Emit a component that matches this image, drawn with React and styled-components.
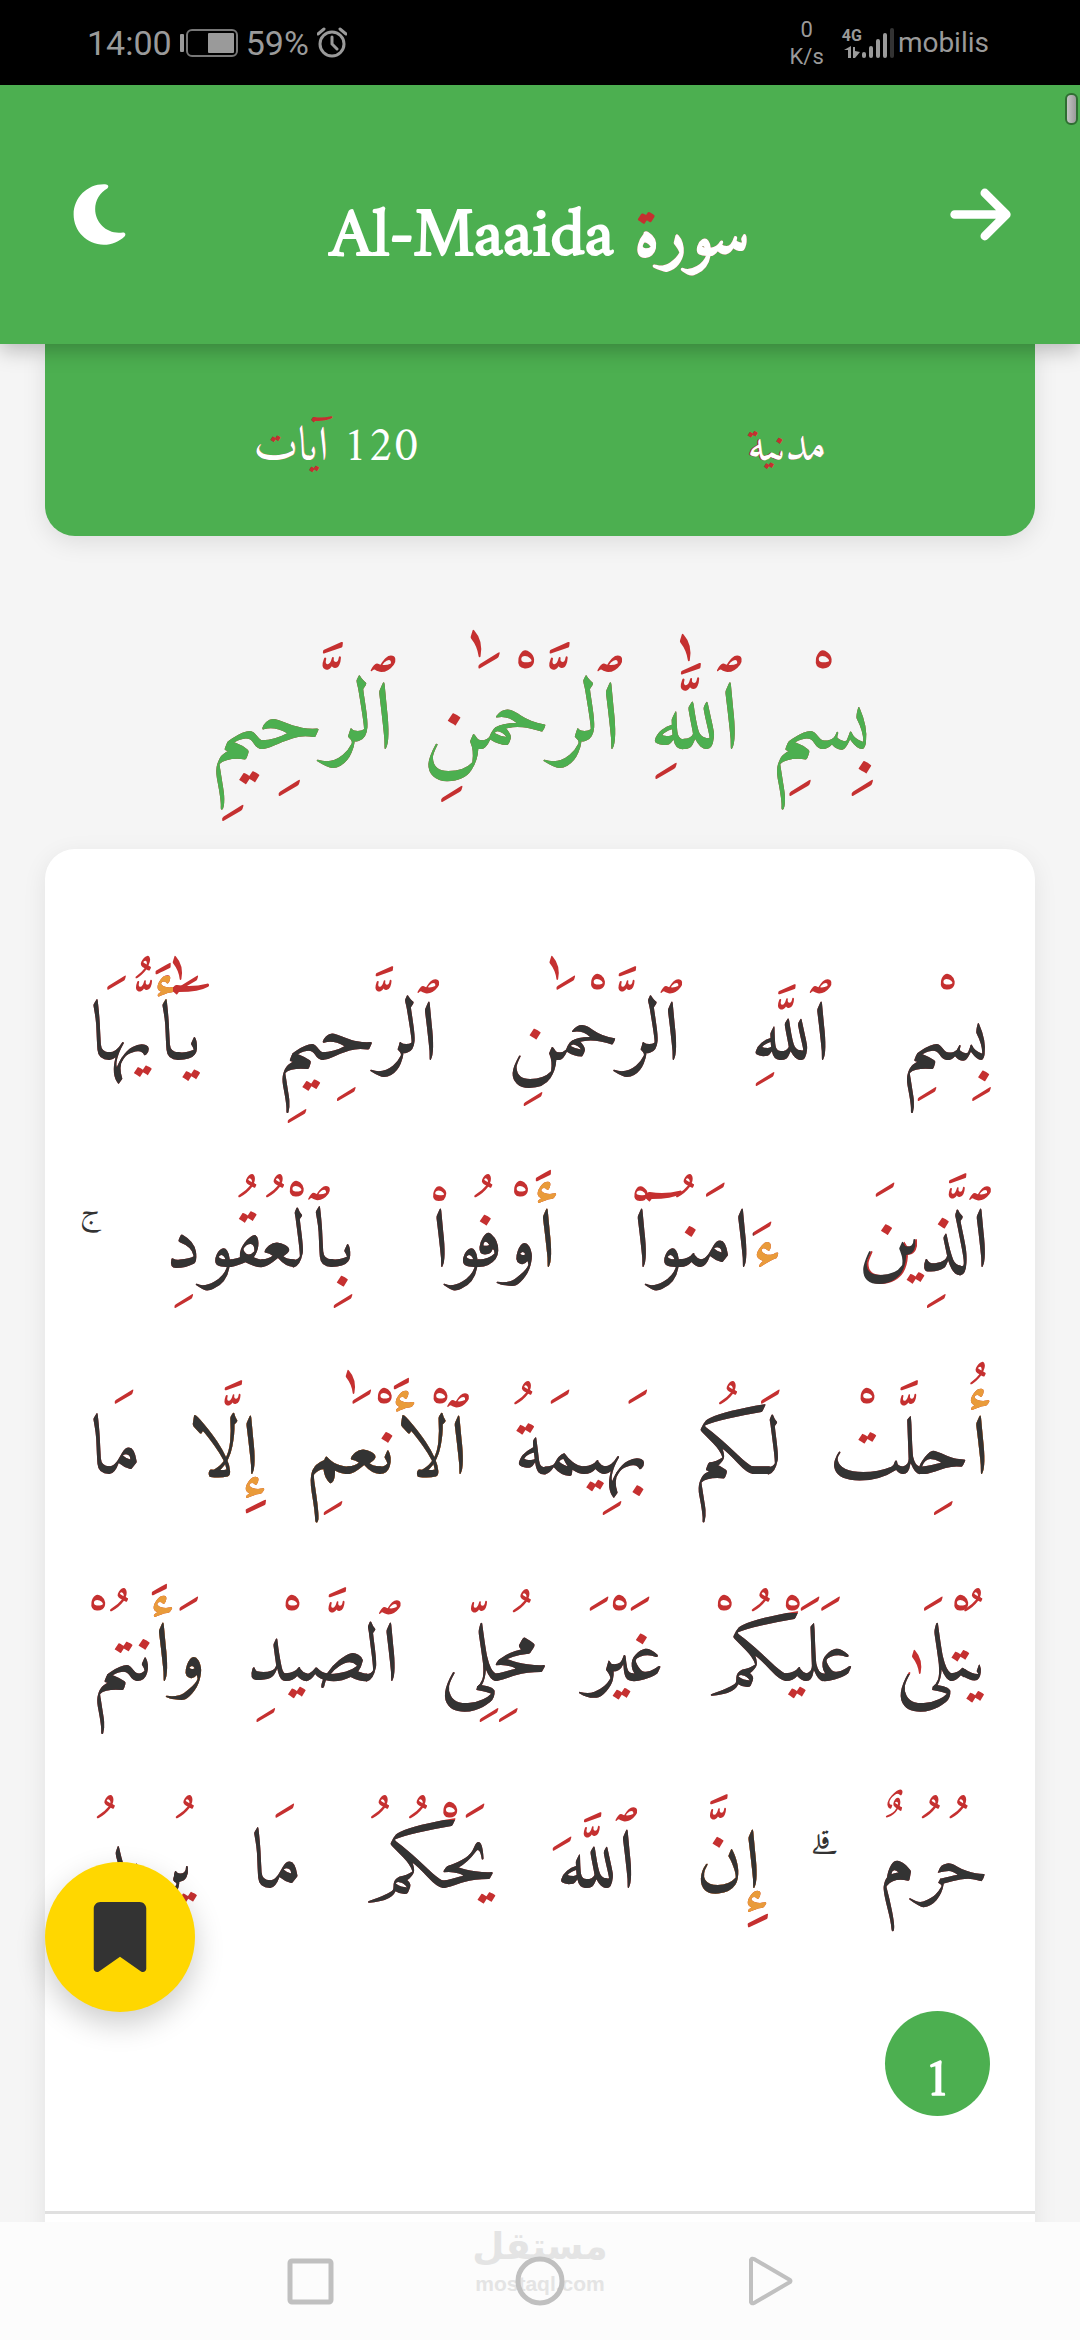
import styled, { createGlobalStyle } from 'styled-components'
import { FaArrowRight, FaBookmark, FaMoon } from 'react-icons/fa6'

const GREEN = '#4caf50'
const INK = '#333'
const MARK = '#c53030'
const HAMZA = '#e99b3a'
const QURAN = '"Amiri Quran", Amiri, "DejaVu Sans", serif'

const GlobalStyle = createGlobalStyle`
  *, *:before, *:after { box-sizing: border-box; }
  body { margin: 0; background: #f5f5f5; }
  button { border: 0; padding: 0; background: none; color: inherit; cursor: pointer; }
`
const Page = styled.div`
  position: relative;
  display: flex;
  flex-direction: column;
  height: 100vh;
  overflow: hidden;
  font-family: ${QURAN};
`

/* status bar */
const StatusBar = styled.div`
  display: flex;
  align-items: center;
  justify-content: space-between;
  flex: none;
  height: 85px;
  padding: 0 91px 0 87px;
  background: #000;
  color: #9a9a9a;
  font-family: Roboto, sans-serif;
`
const StatusGroup = styled.div`
  display: flex;
  align-items: center;
  gap: ${props => props.$gap}px;
`
const StatusText = styled.span`
  font-size: ${props => props.$size || 34}px;
  line-height: 40px;
`
const Speed = styled.span`
  display: flex;
  flex-direction: column;
  align-items: center;
  margin-right: 14px;
  font-size: 22px;
  line-height: 27px;
`
const Signal = styled.span`
  display: flex;
  align-items: flex-end;
`
const Network = styled.span`
  display: flex;
  flex-direction: column;
  align-items: center;
  font-size: 16px;
  font-weight: 700;
  line-height: 16px;
`

/* header */
const Header = styled.header`
  position: relative;
  z-index: 2;
  display: flex;
  align-items: center;
  justify-content: space-between;
  flex: none;
  height: 259px;
  padding: 0 65px;
  background: ${GREEN};
  color: #fff;
  box-shadow: 0 6px 20px rgba(0, 0, 0, 0.25);
`
const Title = styled.h1`
  margin: 0;
  font-size: 69px;
  font-weight: 700;
  line-height: 160px;
`
const IconButton = styled.button`
  display: flex;
  font-size: 69px;
`
const ScrollThumb = styled.div`
  position: absolute;
  z-index: 3;
  top: 93px;
  right: 2px;
  width: 13px;
  height: 32px;
  border: 2px solid #2f6e32;
  border-radius: 6px;
  background: linear-gradient(90deg, #c4c4c4, #9a9a9a);
`

/* content */
const Content = styled.main`
  flex: 1;
  min-height: 0;
  overflow: hidden;
  padding: 0 45px;
`
const InfoCard = styled.div`
  display: flex;
  justify-content: space-around;
  padding: 40px 45px 56px;
  border-radius: 0 0 30px 30px;
  background: ${GREEN};
  color: #fff;
  font-size: 48px;
  line-height: 96px;
  box-shadow: 0 6px 24px rgba(0, 0, 0, 0.1);
`
const Basmala = styled.p`
  margin: 0;
  color: ${GREEN};
  font-size: 96px;
  line-height: 313px;
  text-align: center;
  white-space: nowrap;
`
const Verses = styled.section`
  padding-bottom: 60px;
  border-radius: 30px 30px 0 0;
  background: #fff;
  color: ${INK};
  box-shadow: 0 6px 24px rgba(0, 0, 0, 0.08);
`
const Verse = styled.article`
  padding: 58px 45px 95px;
  border-bottom: 3px solid #e0e0e0;
`
const VerseLine = styled.p`
  display: flex;
  justify-content: space-between;
  margin: 0;
  font-size: 84px;
  line-height: 207px;
`
const Pause = styled.span`
  margin: 0 -8px;
  padding-top: 100px;
  font-size: 48px;
  line-height: 107px;
`
const VerseNumber = styled.span`
  display: flex;
  align-items: center;
  justify-content: center;
  width: 105px;
  height: 105px;
  margin-top: 69px;
  border-radius: 50%;
  background: ${GREEN};
  color: #fff;
  font-size: 54px;
  font-weight: 700;
  line-height: 105px;
`

/* A word is drawn in three layers: every mark and dot in red, then the
   letters with their hamza in orange, then the bare letters in the ink. */
const Layers = styled.span`
  position: relative;
  display: inline-block;
  color: ${MARK};
  white-space: nowrap;
  &:before, &:after {
    position: absolute;
    top: 0;
    right: 0;
  }
  &:before {
    content: attr(data-hamza);
    color: ${HAMZA};
    clip-path: ${props => props.$hamzaClip || 'none'};
  }
  &:after {
    content: attr(data-letters);
    color: ${props => props.$ink};
    clip-path: ${props => props.$clip || 'none'};
  }
`

/* bookmark */
const BookmarkButton = styled.button`
  position: absolute;
  z-index: 2;
  left: 45px;
  bottom: 328px;
  display: flex;
  align-items: center;
  justify-content: center;
  width: 150px;
  height: 150px;
  border-radius: 50%;
  && {
    background: #ffd700;
    color: ${INK};
  }
  font-size: 70px;
  box-shadow: 0 12px 30px rgba(0, 0, 0, 0.2);
`

/* bottom navigation */
const NavBar = styled.nav`
  position: relative;
  z-index: 1;
  display: flex;
  align-items: center;
  justify-content: center;
  gap: 180px;
  flex: none;
  height: 118px;
  background: #fcfcfc;
`
const NavButton = styled.button`
  position: relative;
  display: flex;
`
const Watermark = styled.div`
  position: absolute;
  top: 0;
  left: 0;
  right: 0;
  color: #e4e4e4;
  text-align: center;
  font-weight: 700;
`
const WatermarkName = styled.div`
  font-family: "DejaVu Sans", sans-serif;
  font-size: 37px;
  line-height: 50px;
`
const WatermarkSite = styled.div`
  font-family: "Liberation Sans", sans-serif;
  font-size: 21px;
  line-height: 24px;
`

const MARKS = /[\u064B-\u065F\u0670\u06D6-\u06ED]/g
const DOTLESS = { 'ب': 'ٮ', 'ت': 'ٮ', 'ن': 'ں', 'ي': 'ى', 'ة': 'ه', 'ق': 'ٯ', 'ف': 'ڡ', 'ذ': 'د', 'غ': 'ع' }
const withoutMarks = text => text.replace(MARKS, '').replace(/[ٱآ]/g, 'ا').replace(/./g, c => DOTLESS[c] || c)
const withHamza = text => /[أإء]/.test(text) ? withoutMarks(text) : ''
const bare = text => withoutMarks(text).replace(/[أإ]/g, 'ا')

// cuts off what stands above the letters
const below = (top, right = -40) => `inset(${top}px ${right}px -80px -40px)`

const Word = ({ text, hamza, letters, ink = INK, clip, hamzaClip }) => (
  <Layers
    $ink={ink}
    $clip={clip}
    $hamzaClip={hamzaClip}
    data-hamza={hamza ?? withHamza(text)}
    data-letters={letters ?? bare(text)}
  >
    {text}
  </Layers>
)

const basmala = ['بِسْمِ', 'ٱللَّٰهِ', 'ٱلرَّحْمَٰنِ', 'ٱلرَّحِيمِ']

// where marks change the spacing, the letters keep them and the clip drops them
const lines = [
  [
    { text: 'بِسْمِ' },
    { text: 'ٱللَّهِ' },
    { text: 'ٱلرَّحْمَٰنِ' },
    { text: 'ٱلرَّحِيمِ' },
    {
      text: 'يَٰٓأَيُّهَا',
      hamza: 'يَٰٓأَيُّهَا',
      letters: 'يَٰٓأَيُّهَا',
      clip: 'polygon(-40px 92px, 120% 92px, 120% 155px, 41px 155px, 41px 220px, -40px 220px)',
      hamzaClip: 'inset(69px calc(100% - 83px) 110px 64px)',
    },
  ],
  [
    { text: 'ٱلَّذِينَ', letters: 'ٱلَّدِىںَ', clip: 'inset(88px -40px calc(100% - 176px) -40px)' },
    { text: 'ءَامَنُوٓا۟', hamza: 'ء', letters: 'ءَامَںُوٓا۟', clip: below(90, 30) },
    { text: 'أَوْفُوا۟', hamza: 'أ', letters: 'أَوْڡُوا۟', clip: below(92) },
    {
      text: 'بِٱلْعُقُودِ',
      letters: 'بِٱلْعُقُودِ',
      clip: 'polygon(-40px 113px, 115px 113px, 115px 88px, 120% 88px, 120% 158px, 68px 158px, 68px 177px, -40px 177px)',
    },
    { text: '\u00a0ۚ', pause: true },
  ],
  [
    { text: 'أُحِلَّتْ', hamza: 'أ', letters: 'أُحلَّٮْ', clip: below(92) },
    { text: 'لَكُم' },
    { text: 'بَهِيمَةُ' },
    { text: 'ٱلْأَنْعَٰمِ' },
    { text: 'إِلَّا' },
    { text: 'مَا' },
  ],
  [
    {
      text: 'يُتْلَىٰ',
      letters: 'يُتْلَىٰ',
      clip: `polygon(
        -40px 146px, calc(100% - 61px) 146px, calc(100% - 61px) 88px, calc(100% - 43px) 88px,
        calc(100% - 43px) 135px, 120% 135px, 120% 156px, calc(100% - 29px) 156px,
        calc(100% - 29px) 200px, -40px 200px
      )`,
    },
    { text: 'عَلَيْكُمْ', letters: 'عَلَىْكُمْ', clip: below(85) },
    { text: 'غَيْرَ' },
    { text: 'مُحِلِّى' },
    { text: 'ٱلصَّيْدِ' },
    { text: 'وَأَنتُمْ', hamza: 'وأ', letters: 'وَأَںٮُمْ', clip: below(92) },
  ],
  [
    { text: 'حُرُمٌ' },
    { text: '\u00a0ۗ', pause: true },
    { text: 'إِنَّ' },
    { text: 'ٱللَّهَ' },
    { text: 'يَحْكُمُ', letters: 'ىَحْكُمُ', clip: below(85) },
    { text: 'مَا' },
    {
      text: 'يُرِيدُ',
      letters: 'يُرِيدُ',
      clip: `polygon(
        -40px 88px, 120% 88px, 120% 156px, calc(100% - 24px) 156px, calc(100% - 24px) 176px,
        calc(100% - 58px) 176px, calc(100% - 58px) 156px, -40px 156px
      )`,
    },
  ],
]

const Battery = () => (
  <svg width="58" height="28" viewBox="0 0 58 28">
    <rect x="0" y="5" width="4" height="18" rx="1" fill="#9a9a9a" />
    <rect x="7" y="1" width="50" height="26" rx="5" fill="none" stroke="#777" strokeWidth="2" />
    <rect x="28" y="4" width="26" height="20" rx="1" fill="#9a9a9a" />
  </svg>
)

const Alarm = () => (
  <svg width="30" height="32" viewBox="0 0 30 32" fill="none" stroke="#9a9a9a" strokeWidth="3">
    <circle cx="15" cy="17" r="12" />
    <path d="M15 10v7l5 5M1 7l6-5M29 7l-6-5" strokeLinecap="round" />
  </svg>
)

const App = () => (
  <Page>
    <GlobalStyle />
    <StatusBar>
      <StatusGroup $gap={8}>
        <StatusText>14:00</StatusText>
        <Battery />
        <StatusText>59%</StatusText>
        <Alarm />
      </StatusGroup>
      <StatusGroup $gap={4}>
        <Speed>
          <span>0</span>
          <span>K/s</span>
        </Speed>
        <Signal>
          <Network>
            4G
            <svg width="16" height="14" viewBox="0 0 16 14" fill="#9a9a9a">
              <path d="M4 14V6H0L7 2v12zM9 3h2v4l5 1-5 6H9z" />
            </svg>
          </Network>
          <svg width="32" height="30" viewBox="0 0 32 30" fill="#9a9a9a">
            <rect x="0" y="24" width="4" height="6" rx="2" />
            <rect x="7" y="18" width="4" height="12" rx="2" />
            <rect x="14" y="11" width="4" height="19" rx="2" />
            <rect x="21" y="5" width="4" height="25" rx="2" />
            <rect x="28" y="0" width="4" height="30" rx="2" fill="#333" />
          </svg>
        </Signal>
        <StatusText $size={28}>mobilis</StatusText>
      </StatusGroup>
    </StatusBar>

    <Header dir="rtl">
      <IconButton type="button" aria-label="رجوع"><FaArrowRight /></IconButton>
      <Title><Word text="سورة" ink="#fff" /> Al-Maaida</Title>
      <IconButton type="button" aria-label="الوضع الليلي"><FaMoon /></IconButton>
    </Header>
    <ScrollThumb />

    <Content dir="rtl">
      <InfoCard>
        <span><Word text="مدنية" ink="#fff" /></span>
        <span dir="ltr">
          <Word text="آيات" ink="#fff" /> 120
        </span>
      </InfoCard>
      <Basmala>
        {basmala.map(word => [<Word key={word} text={word} ink={GREEN} />, ' '])}
      </Basmala>
      <Verses>
        <Verse>
          {lines.map((words, i) => (
            <VerseLine key={i}>
              {words.map((word, j) => (
                word.pause ? <Pause key={j}>{word.text}</Pause> : <Word key={j} {...word} />
              ))}
            </VerseLine>
          ))}
          <VerseNumber>1</VerseNumber>
        </Verse>
      </Verses>
    </Content>

    <BookmarkButton type="button" aria-label="إشارة مرجعية"><FaBookmark /></BookmarkButton>

    <NavBar>
      <Watermark>
        <WatermarkName>مستقل</WatermarkName>
        <WatermarkSite>mostaql.com</WatermarkSite>
      </Watermark>
      <NavButton type="button" aria-label="Recent">
        <svg width="50" height="50" viewBox="0 0 50 50" fill="none" stroke="#c0c0c0" strokeWidth="5">
          <rect x="5" y="5" width="41" height="41" rx="2" />
        </svg>
      </NavButton>
      <NavButton type="button" aria-label="Home">
        <svg width="50" height="50" viewBox="0 0 50 50" fill="none" stroke="#c0c0c0" strokeWidth="5">
          <circle cx="25" cy="25" r="22" />
        </svg>
      </NavButton>
      <NavButton type="button" aria-label="Back">
        <svg width="50" height="50" viewBox="0 0 50 50" fill="none" stroke="#c0c0c0" strokeWidth="4" strokeLinejoin="round">
          <path d="M6 4v42q1 2 3 1l36-21q1-1 0-2L9 3q-2-1-3 1z" />
        </svg>
      </NavButton>
    </NavBar>
  </Page>
)

export default App
